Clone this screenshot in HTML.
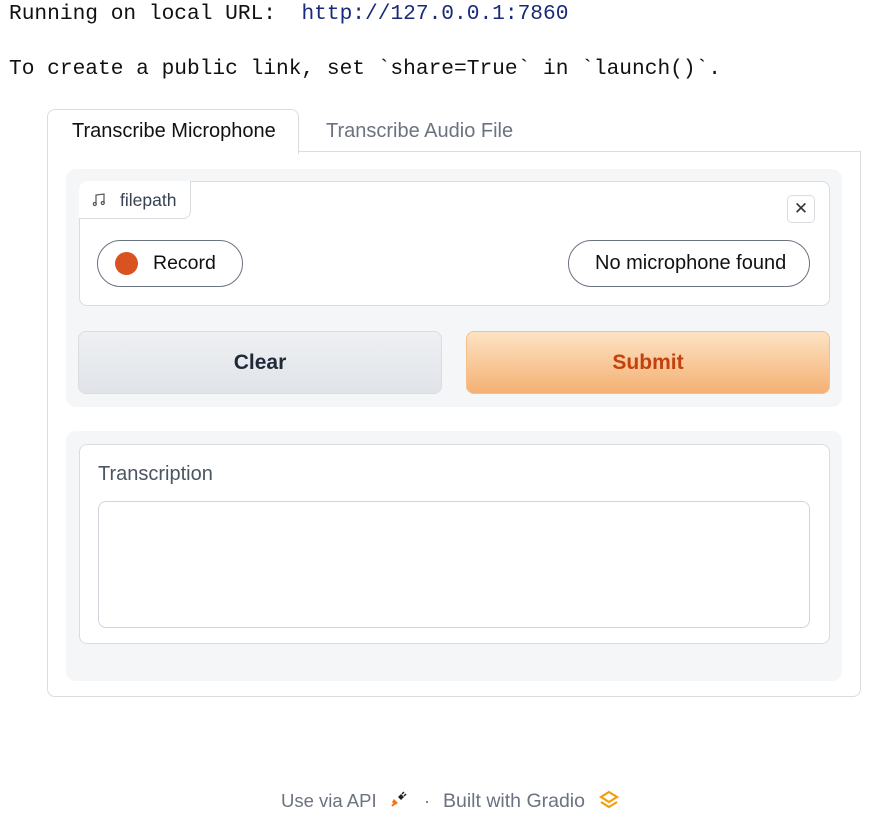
<!DOCTYPE html>
<html><head><meta charset="utf-8"><style>
*{box-sizing:border-box;margin:0;padding:0}
body{width:889px;height:836px;background:#fff;position:relative;overflow:hidden;font-family:"Liberation Sans",sans-serif;color:#1f2937}
.mono{position:absolute;left:9px;font-family:"Liberation Mono",monospace;font-size:21.2px;color:#111;white-space:pre}
.abs{position:absolute}
.t{white-space:nowrap}
</style></head><body>
<div class="mono" style="top:2px">Running on local URL:  <span style="color:#1a2a7a">http://127.0.0.1:7860</span></div>
<div class="mono" style="top:57px">To create a public link, set `share=True` in `launch()`.</div>

<div class="abs" style="left:47px;top:152px;width:814px;height:545px;border:1px solid #d9dce1;border-top:none;border-radius:0 0 8px 8px"></div>
<div class="abs" style="left:298px;top:151px;width:563px;height:1px;background:#d9dce1"></div>
<div class="abs" style="left:47px;top:109px;width:252px;height:45px;border:1px solid #d9dce1;border-bottom:none;border-radius:8px 8px 0 0;background:#fff"></div>
<div class="abs t" style="left:72px;top:120px;font-size:20px;color:#111">Transcribe Microphone</div>
<div class="abs t" style="left:326px;top:120px;font-size:20px;color:#6b7280">Transcribe Audio File</div>

<div class="abs" style="left:66px;top:169px;width:776px;height:238px;background:#f5f6f8;border-radius:10px"></div>
<div class="abs" style="left:79px;top:181px;width:751px;height:125px;background:#fff;border:1px solid #d9dce1;border-radius:8px"></div>
<div class="abs" style="left:79px;top:181px;width:112px;height:38px;border-right:1px solid #d9dce1;border-bottom:1px solid #d9dce1;border-radius:8px 0 8px 0;background:#fff"></div>
<svg class="abs" style="left:92px;top:193px" width="14" height="14" viewBox="0 0 14 14" fill="none" stroke="#555" stroke-width="1.2"><path d="M4 11V2l8-1v9"/><circle cx="2.8" cy="11" r="1.5"/><circle cx="10.8" cy="10" r="1.5"/></svg>
<div class="abs t" style="left:120px;top:190px;font-size:17.5px;color:#374151">filepath</div>
<div class="abs" style="left:787px;top:195px;width:28px;height:28px;border:1px solid #d9dce1;border-radius:5px;background:#fff;text-align:center;line-height:26px;font-size:17px;color:#333">✕</div>
<div class="abs" style="left:97px;top:240px;width:146px;height:47px;border:1px solid #6b7280;border-radius:24px;background:#fff"></div>
<div class="abs" style="left:115px;top:252px;width:23px;height:23px;border-radius:50%;background:#d9521f"></div>
<div class="abs t" style="left:153px;top:252px;font-size:19.5px;color:#111">Record</div>
<div class="abs" style="left:568px;top:240px;width:242px;height:47px;border:1px solid #6b7280;border-radius:24px;background:#fff;overflow:hidden"><div class="t" style="position:absolute;left:26px;top:11px;font-size:20px;color:#111;width:192px;overflow:hidden">No microphone found</div></div>

<div class="abs" style="left:78px;top:331px;width:364px;height:63px;border-radius:8px;background:linear-gradient(#eef0f3,#e0e3e8);border:1px solid #d9dce1;text-align:center;line-height:61px;font-size:21px;font-weight:bold;color:#1f2937">Clear</div>
<div class="abs" style="left:466px;top:331px;width:364px;height:63px;border-radius:8px;background:linear-gradient(#fde3c4,#f4b073);border:1px solid #f5c08a;text-align:center;line-height:61px;font-size:21px;font-weight:bold;color:#c2410c">Submit</div>

<div class="abs" style="left:66px;top:431px;width:776px;height:250px;background:#f5f6f8;border-radius:10px"></div>
<div class="abs" style="left:79px;top:444px;width:751px;height:200px;background:#fff;border:1px solid #d9dce1;border-radius:8px"></div>
<div class="abs t" style="left:98px;top:463px;font-size:20px;color:#4b5563">Transcription</div>
<div class="abs" style="left:98px;top:501px;width:712px;height:127px;border:1px solid #d1d5db;border-radius:8px;background:#fff"></div>

<div class="abs t" style="left:281px;top:790px;font-size:18.5px;color:#6b7280">Use via API</div>
<svg class="abs" style="left:388px;top:789px" width="20" height="20" viewBox="0 0 20 20"><path d="M4 17l3-3" stroke="#f97316" stroke-width="2"/><path d="M6 10l4 4-3 2-3-3z" fill="#f97316"/><path d="M10 8l3-3 3 3-3 3z" fill="#222"/><path d="M14 5l2-2M16 7l2-2" stroke="#222" stroke-width="1.5"/></svg>
<div class="abs t" style="left:424px;top:790px;font-size:18.5px;color:#6b7280">·</div>
<div class="abs t" style="left:443px;top:790px;font-size:19.5px;color:#6b7280">Built with Gradio</div>
<svg class="abs" style="left:598px;top:790px" width="22" height="20" viewBox="0 0 22 20" fill="none" stroke="#f59e0b" stroke-width="2.2"><path d="M11 2l8 5-8 5-8-5z"/><path d="M3 12l8 5 8-5"/></svg>
</body></html>
